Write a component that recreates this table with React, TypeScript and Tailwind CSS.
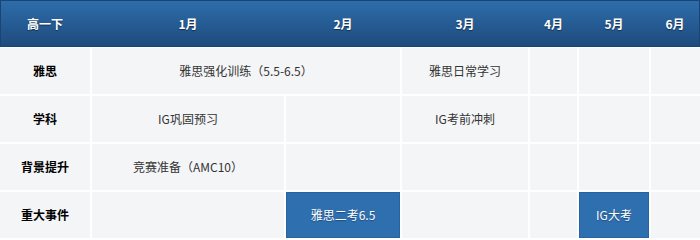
const months = ["1月", "2月", "3月", "4月", "5月", "6月"];

type Cell = { text?: string; span?: number; hot?: boolean };

const rows: { label: string; cells: Cell[] }[] = [
  { label: "雅思", cells: [{ text: "雅思强化训练（5.5-6.5）", span: 2 }, { text: "雅思日常学习" }, {}, {}, {}] },
  { label: "学科", cells: [{ text: "IG巩固预习" }, {}, { text: "IG考前冲刺" }, {}, {}, {}] },
  { label: "背景提升", cells: [{ text: "竞赛准备（AMC10）" }, {}, {}, {}, {}, {}] },
  { label: "重大事件", cells: [{}, { text: "雅思二考6.5", hot: true }, {}, {}, { text: "IG大考", hot: true }, {}] },
];

const cols = "grid grid-cols-[90px_192px_114px_126px_47px_70px_1fr] gap-x-[2px]";

export default function App() {
  return (
    <div className="w-[700px] h-[240px] bg-white font-['Microsoft_YaHei','Noto_Sans_CJK_SC',sans-serif] text-[12px]">
      {/* 表头 */}
      <div className="h-[47px] border border-[#1a4473] bg-gradient-to-b from-[#2e6dab] to-[#1e4b7d]">
        <div className={`${cols} h-full -ml-px`}>
          {["高一下", ...months].map((m) => (
            <div key={m} className="flex items-center justify-center font-bold text-white [text-shadow:0_1px_1px_rgba(0,0,0,0.45)]">
              {m}
            </div>
          ))}
        </div>
      </div>

      {/* 内容 */}
      <div className={`${cols} gap-y-[2px] mt-[1px]`}>
        {rows.map((r) => (
          <div key={r.label} className="contents">
            <div className="h-[46px] flex items-center justify-center bg-[#f4f5f7] font-bold text-black">{r.label}</div>
            {r.cells.map((c, i) => (
              <div
                key={i}
                className={`h-[46px] flex items-center justify-center ${c.span === 2 ? "col-span-2" : ""} ${
                  c.hot ? "bg-[#2e6fb0] border border-[#2862a0] text-white [text-shadow:0_1px_1px_rgba(0,0,0,0.3)]" : "bg-[#f4f5f7] text-[#333]"
                }`}
              >
                {c.text}
              </div>
            ))}
          </div>
        ))}
      </div>
    </div>
  );
}
